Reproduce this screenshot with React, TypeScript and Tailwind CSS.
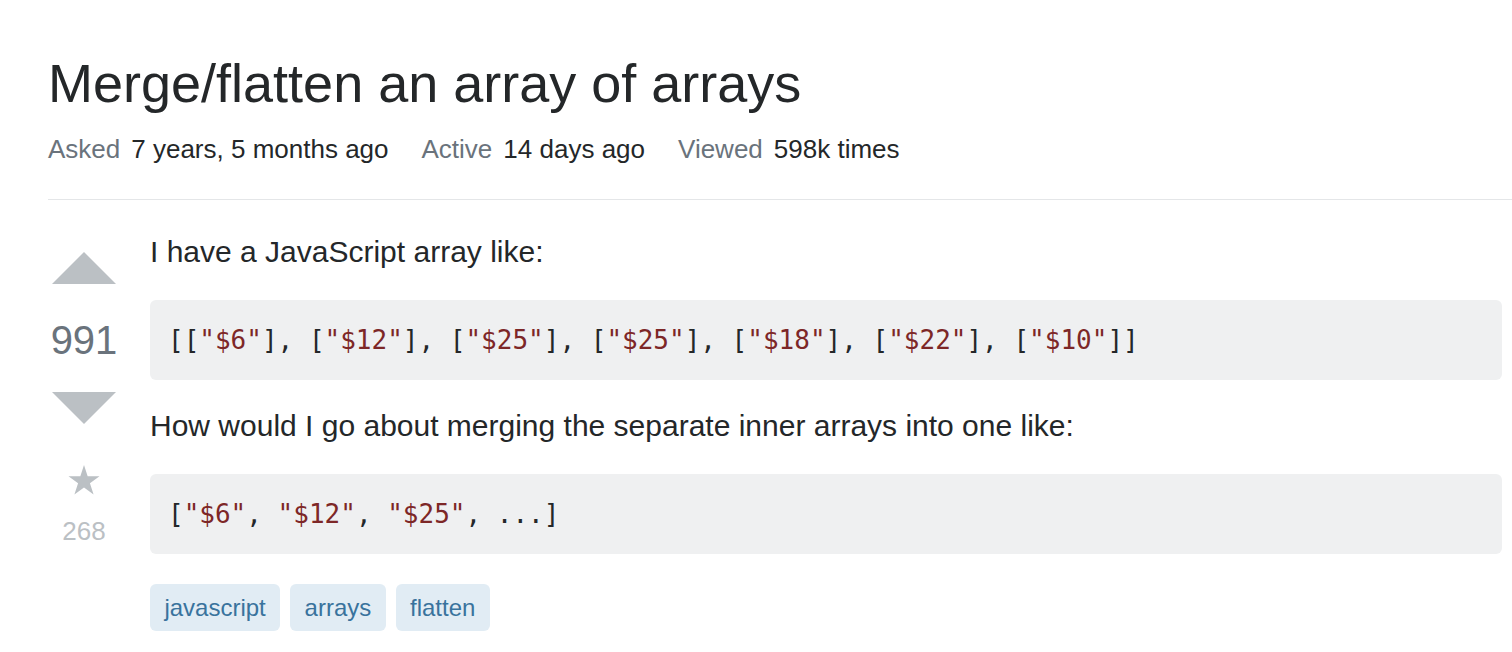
import React from "react";

const S = ({ children }: { children: React.ReactNode }) => (
  <span className="text-[#7d2727]">{children}</span>
);

function UpArrow() {
  return (
    <svg width="64" height="32" viewBox="0 0 64 32" className="block">
      <path d="M0 32 L32 0 L64 32 Z" fill="#bbc0c4" />
    </svg>
  );
}

function DownArrow() {
  return (
    <svg width="64" height="32" viewBox="0 0 64 32" className="block">
      <path d="M0 0 L64 0 L32 32 Z" fill="#bbc0c4" />
    </svg>
  );
}

function Star() {
  return (
    <svg width="32" height="30" viewBox="0 0 32 30" className="block">
      <polygon
        points="16,0 19.66,11.26 31.5,11.26 21.93,18.23 25.58,29.49 16,22.53 6.42,29.49 10.07,18.23 0.5,11.26 12.34,11.26"
        fill="#bbc0c4"
      />
    </svg>
  );
}

export default function App() {
  const sans = { fontFamily: '"Liberation Sans", Arial, Helvetica, sans-serif' };
  const mono = { fontFamily: '"DejaVu Sans Mono", Menlo, monospace' };
  return (
    <div
      className="w-full min-h-[652px] bg-white text-[#242729] pl-[48px] pt-[51px]"
      style={sans}
    >
      <h1 className="text-[54px] leading-[64px] font-normal text-[#242729]">
        Merge/flatten an array of arrays
      </h1>
      <div className="mt-[19px] pb-[35px] border-b border-[#e4e6e8] flex items-baseline text-[26px] leading-[30px]">
        <div className="mr-[33px] flex">
          <span className="text-[#6a737c] mr-[11px]">Asked</span>
          <span className="text-[#242729]">7 years, 5 months ago</span>
        </div>
        <div className="mr-[33px] flex">
          <span className="text-[#6a737c] mr-[11px]">Active</span>
          <span className="text-[#242729]">14 days ago</span>
        </div>
        <div className="flex">
          <span className="text-[#6a737c] mr-[11px]">Viewed</span>
          <span className="text-[#242729]">598k times</span>
        </div>
      </div>

      <div className="flex">
        <div className="w-[72px] shrink-0 flex flex-col items-center pt-[52px]">
          <UpArrow />
          <div className="mt-[36px] text-[40px] leading-[40px] text-[#6a737c]">991</div>
          <div className="mt-[32px]">
            <DownArrow />
          </div>
          <div className="mt-[41px]">
            <Star />
          </div>
          <div className="mt-[23px] text-[26px] leading-[26px] text-[#bbc0c4]">268</div>
        </div>

        <div className="flex-1 ml-[30px] pr-[10px] pt-[32px]">
          <p className="text-[30px] leading-[39px] mb-[29px]">I have a JavaScript array like:</p>
          <pre
            className="bg-[#eff0f1] rounded-[6px] h-[80px] px-[18px] py-[23px] text-[26px] leading-[34px] text-[#242729] mb-[26px] overflow-hidden"
            style={mono}
          >
            [[<S>"$6"</S>], [<S>"$12"</S>], [<S>"$25"</S>], [<S>"$25"</S>], [<S>"$18"</S>], [
            <S>"$22"</S>], [<S>"$10"</S>]]
          </pre>
          <p className="text-[30px] leading-[39px] mb-[29px]">
            How would I go about merging the separate inner arrays into one like:
          </p>
          <pre
            className="bg-[#eff0f1] rounded-[6px] h-[80px] px-[18px] py-[23px] text-[26px] leading-[34px] text-[#242729] mb-[30px] overflow-hidden"
            style={mono}
          >
            [<S>"$6"</S>, <S>"$12"</S>, <S>"$25"</S>, ...]
          </pre>
          <div className="flex gap-[10px]">
            {["javascript", "arrays", "flatten"].map((t) => (
              <span
                key={t}
                className="h-[47px] inline-flex items-center px-[14.4px] rounded-[6px] bg-[#e1ecf4] text-[#39739d] text-[24px]"
              >
                {t}
              </span>
            ))}
          </div>
        </div>
      </div>
    </div>
  );
}
